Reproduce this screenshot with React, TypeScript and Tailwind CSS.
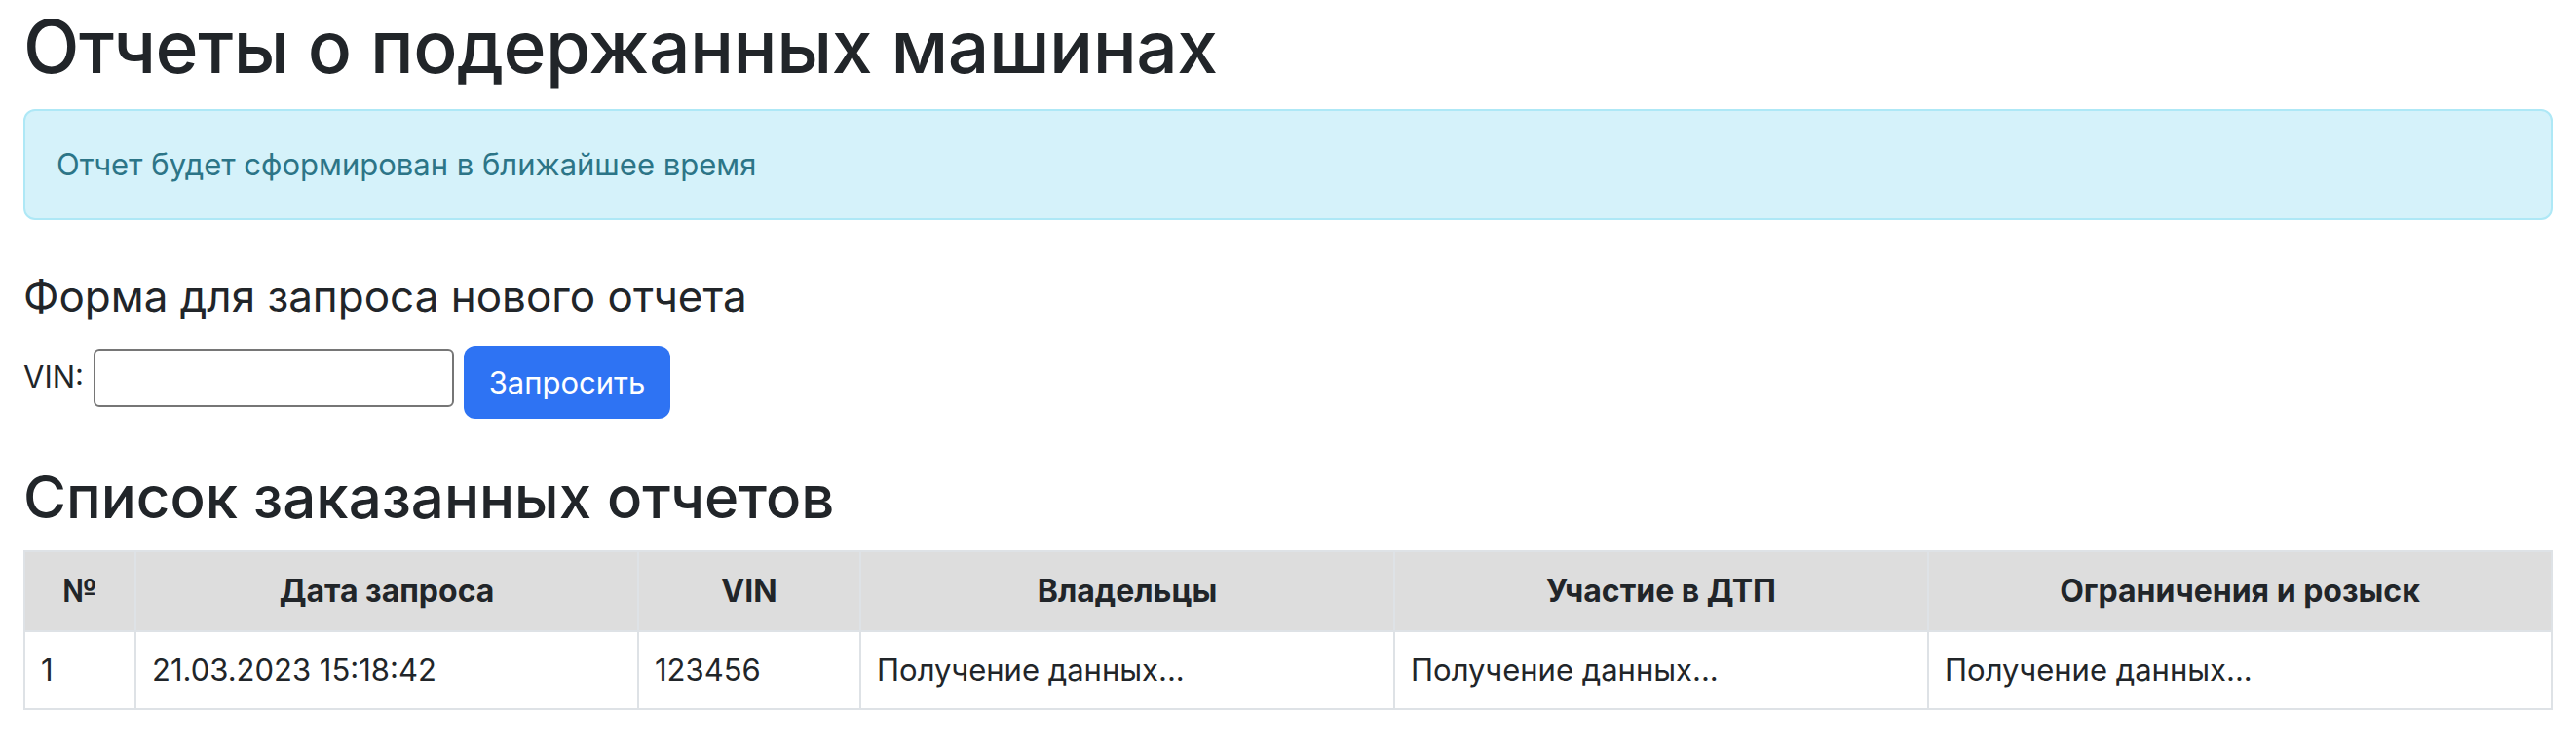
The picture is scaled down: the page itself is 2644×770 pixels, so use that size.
import { useState } from 'react';

const reports = [
  {
    id: 1,
    date: '21.03.2023 15:18:42',
    vin: '123456',
    owners: 'Получение данных...',
    accidents: 'Получение данных...',
    restrictions: 'Получение данных...',
  },
];

export default function App() {
  const [vin, setVin] = useState('');

  return (
    <div
      className="min-h-screen bg-white px-[24px] text-[#212529]"
      style={{ fontFamily: 'Inter, "Noto Sans", "Liberation Sans", sans-serif' }}
    >
      <h1 className="text-[75px] leading-[96px] font-medium tracking-[-0.5px] mb-[16px]">
        Отчеты о подержанных машинах
      </h1>

      {/* ALERT */}
      <div className="px-[32px] py-[31px] border-2 border-[#aee8f6] bg-[#d5f2fa] rounded-[12px] text-[31px] leading-[48px] text-[#2c7587]">
        Отчет будет сформирован в ближайшее время
      </div>

      <h4 className="mt-[49px] text-[44px] leading-[58px] mb-[16px]">
        Форма для запроса нового отчета
      </h4>

      <form
        onSubmit={(e) => e.preventDefault()}
        className="flex items-center h-[81px] text-[31px]"
      >
        <label htmlFor="vin" className="mr-[10px] mb-[4px]">
          VIN:
        </label>
        <input
          id="vin"
          value={vin}
          onChange={(e) => setVin(e.target.value)}
          className="w-[370px] h-[60px] border-2 border-[#767676] rounded-[6px] px-[4px] mb-[4px]"
        />
        <button
          type="submit"
          className="ml-[10px] w-[212px] h-[75px] bg-[#2e73f3] text-white rounded-[12px] text-[31px] leading-[48px] mt-[6px]"
        >
          Запросить
        </button>
      </form>

      <h2 className="mt-[42px] text-[60px] leading-[77px] font-medium mb-[16px]">
        Список заказанных отчетов
      </h2>

      <table className="w-full table-fixed border-collapse text-[31px] leading-[48px]">
        <thead>
          <tr className="bg-[#dddddd] text-[32px]">
            <th className="w-[114px] border-2 border-[#dee2e6] px-[16px] py-[16px] font-bold text-center">№</th>
            <th className="w-[516px] border-2 border-[#dee2e6] px-[16px] py-[16px] font-bold text-center">Дата запроса</th>
            <th className="w-[228px] border-2 border-[#dee2e6] px-[16px] py-[16px] font-bold text-center">VIN</th>
            <th className="w-[548px] border-2 border-[#dee2e6] px-[16px] py-[16px] font-bold text-center">Владельцы</th>
            <th className="w-[548px] border-2 border-[#dee2e6] px-[16px] py-[16px] font-bold text-center">Участие в ДТП</th>
            <th className="border-2 border-[#dee2e6] px-[16px] py-[16px] font-bold text-center">Ограничения и розыск</th>
          </tr>
        </thead>
        <tbody>
          {reports.map((r) => (
            <tr key={r.id}>
              <td className="border-2 border-[#dee2e6] px-[16px] py-[15px]">{r.id}</td>
              <td className="border-2 border-[#dee2e6] px-[16px] py-[15px]">{r.date}</td>
              <td className="border-2 border-[#dee2e6] px-[16px] py-[15px]">{r.vin}</td>
              <td className="border-2 border-[#dee2e6] px-[16px] py-[15px]">{r.owners}</td>
              <td className="border-2 border-[#dee2e6] px-[16px] py-[15px]">{r.accidents}</td>
              <td className="border-2 border-[#dee2e6] px-[16px] py-[15px]">{r.restrictions}</td>
            </tr>
          ))}
        </tbody>
      </table>
    </div>
  );
}
